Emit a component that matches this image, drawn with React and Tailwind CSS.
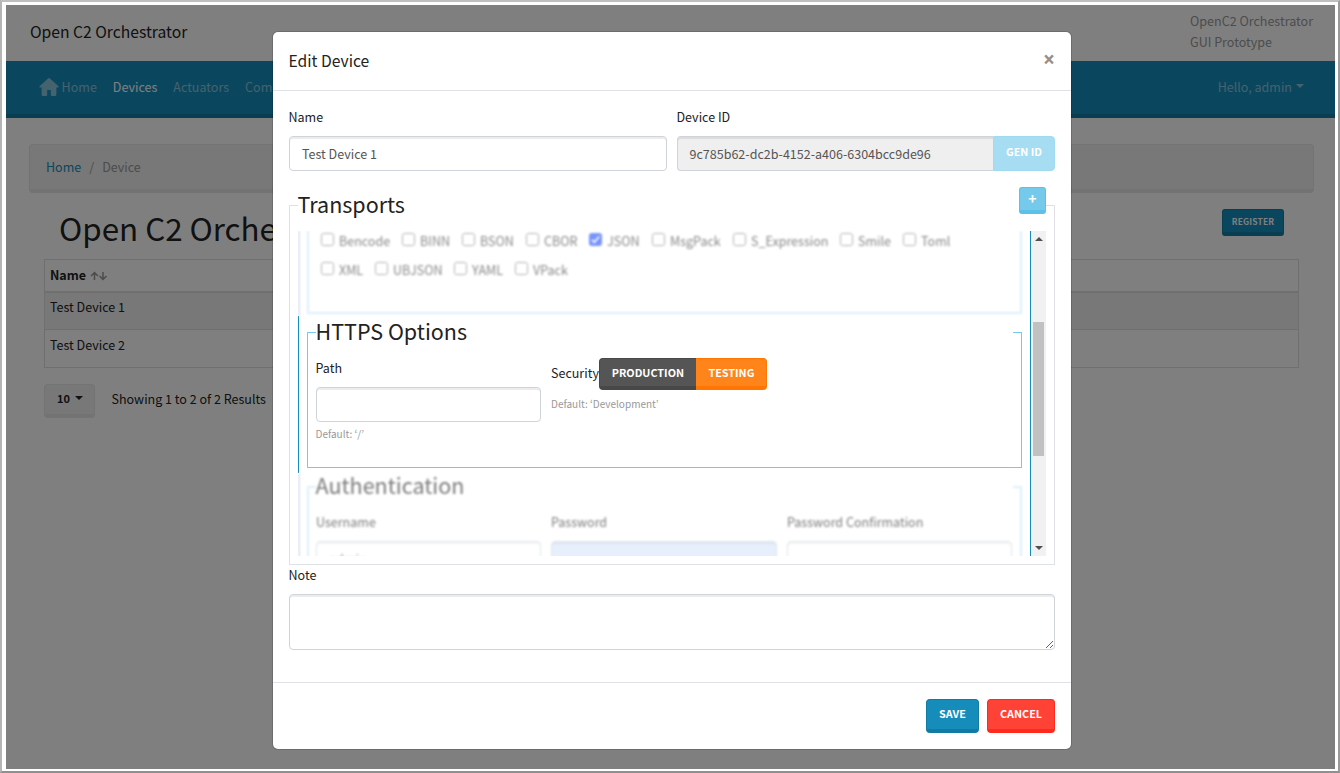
import React from "react";

const inputClass =
  "block w-full rounded-[4px] border border-[#ced4da] bg-white px-3 text-[12.53px] leading-[21px] text-[#555] shadow-[inset_0_2px_0_rgba(0,0,0,0.075)] outline-none";

const formats = [
  ["Bencode", "w-[81px]"],
  ["BINN", "w-[60px]"],
  ["BSON", "w-[64px]"],
  ["CBOR", "w-[63px]"],
  ["JSON", "w-[63px]"],
  ["MsgPack", "w-[81px]"],
  ["S_Expression", "w-[107px]"],
  ["Smile", "w-[63px]"],
  ["Toml", "w-[60px]"],
];
const formatsMore = [
  ["XML", "w-[54px]"],
  ["UBJSON", "w-[79px]"],
  ["YAML", "w-[61px]"],
  ["VPack", "w-[60px]"],
];

function Check({ label, width }) {
  const on = label === "JSON";
  return (
    <div className={`flex h-[29px] shrink-0 ${width}`}>
      <span
        className={`mt-px flex h-[13px] w-[13px] shrink-0 items-center justify-center rounded-[2.5px] border ${
          on ? "border-[#0b3cf5] bg-[#0b3cf5]" : "border-[#767676] bg-white"
        }`}
      >
        {on && (
          <svg viewBox="0 0 12 12" className="h-[11px] w-[11px]" fill="none" stroke="white" strokeWidth="1.7">
            <path d="M2 6.2 4.8 9 10 2.8" />
          </svg>
        )}
      </span>
      <span className="ml-[5px] mt-[-2px] whitespace-nowrap leading-[21px]">{label}</span>
    </div>
  );
}

function Caret() {
  return (
    <span className="mb-[3px] ml-[4px] h-0 w-0 border-x-[4px] border-t-[4px] border-x-transparent border-t-current" />
  );
}

function Page() {
  return (
    <div className="h-full w-full bg-white">
      <header className="flex h-14 justify-between pl-6 pr-[22px]">
        <div className="pt-[14px] text-[15.67px] leading-[26px] text-[#222]">Open C2 Orchestrator</div>
        <div className="pt-[5px] leading-[21px] text-[#999]">
          OpenC2 Orchestrator
          <br />
          GUI Prototype
        </div>
      </header>
      <nav className="flex h-[57px] items-start justify-between border-b-[4px] border-[#127ba3] bg-[#158cba] pl-8 pr-[31px] pt-[16px] text-white/50">
        <div className="flex h-[21px] items-center gap-4">
          <span className="flex items-center">
            <svg viewBox="0 0 22 20" className="-ml-[0.4px] mb-px mr-[2px] h-[20px] w-[22px]" fill="currentColor">
              <path d="M10 1.4Q11 .5 12 1.4L20.5 9.2Q21.2 10.4 20 10.6H18.4V17.4Q18.4 19 17 19H14Q12.8 19 12.8 17.8V13H9.2V17.8Q9.2 19 8 19H5Q3.6 19 3.6 17.4V10.6H2Q.8 10.4 1.5 9.2Z" />
            </svg>
            Home
          </span>
          <span className="text-white">Devices</span>
          <span>Actuators</span>
          <span>Commands</span>
        </div>
        <div className="flex h-[21px] items-center">
          Hello, admin <Caret />
        </div>
      </nav>
      <main className="px-[23px] pt-[26px]">
        <div className="mr-[-2px] flex h-[49px] items-start gap-2 rounded-[4px] border border-b-[4px] border-[#e6e6e6] bg-[#f0f0f0] pl-4 pt-[10.5px] leading-[21px] text-[#999]">
          <span className="text-[#158cba]">Home</span>
          <span>/</span>
          <span>Device</span>
        </div>
        <div className="pl-[15px] pr-[13px]">
          <div className="flex h-[66px] items-start justify-between pl-[15px] pr-[15px]">
            <h1 className="pt-[14px] text-[31.33px] leading-[42px] text-[#222]">Open C2 Orchestrator</h1>
            <button className="mt-[16px] flex h-[27px] w-[62px] justify-center rounded-[3px] border border-b-[4px] border-[#127ba3] bg-[#158cba] pt-[3px] text-[8.45px] font-bold leading-[16px] tracking-[0.15px] text-white">
              REGISTER
            </button>
          </div>
          <div className="border border-[#dedede]">
            <div className="flex h-[33px] items-center border-b-2 border-[#dedede] pl-[5px] font-bold text-[#222]">
              Name
              <svg viewBox="0 0 18 10" className="ml-[3.5px] h-[10px] w-[18px]" fill="none" stroke="#999" strokeWidth="1.5">
                <path d="M4.5 9V1.5M1 5 4.5 1.5 8 5M13 1v7.5M9.5 5 13 8.5 16.5 5" />
              </svg>
            </div>
            <div className="h-[37px] border-b border-[#dedede] bg-[#f0f0f0] pl-[5px] pt-[3px] leading-[21px] text-[#222]">
              Test Device 1
            </div>
            <div className="h-[37px] pl-[5px] pt-[4px] leading-[21px] text-[#222]">Test Device 2</div>
          </div>
          <div className="flex pt-4">
            <button className="flex h-[34px] w-[51px] justify-center rounded-[4px] border border-b-[4px] border-[#e6e6e6] bg-[#f0f0f0] pl-px pt-[4px] text-[10.97px] font-bold leading-[18px] text-[#222]">
              10
              <span className="ml-[5px] mt-[7px] h-0 w-0 border-x-[4px] border-t-[4px] border-x-transparent border-t-current" />
            </button>
            <span className="ml-[16.5px] mt-[4px] leading-[21px] text-[#222]">Showing 1 to 2 of 2 Results</span>
          </div>
        </div>
      </main>
    </div>
  );
}

function Modal() {
  return (
    <div className="absolute left-[273px] top-[32px] flex h-[717px] w-[798px] flex-col rounded-[5px] bg-white text-[#222] shadow-[0_0_0_1px_rgba(0,0,0,0.15)]">
      <div className="flex h-[59px] justify-between border-b border-[#dee2e6] px-4">
        <h5 className="-ml-[0.5px] pt-[16px] text-[15.67px] leading-[26px]">Edit Device</h5>
        <span className="pt-[14px] font-['Open_Sans',sans-serif] text-[21px] font-bold leading-[26px] text-[#919191]">
          ×
        </span>
      </div>
      <div className="flex h-[591px] flex-col px-4 pt-4">
        <div className="flex gap-[10px]">
          <div className="w-[378px]">
            <label className="-ml-[0.5px] block h-[29px] leading-[19px]">Name</label>
            <input className={`${inputClass} h-[35px]`} defaultValue="Test Device 1" />
          </div>
          <div className="w-[378px]">
            <label className="-ml-[0.5px] block h-[29px] leading-[19px]">Device ID</label>
            <div className="flex">
              <div className="h-[35px] w-[316px] rounded-l-[4px] border border-r-0 border-[#ced4da] bg-[#efefef] px-[11.5px] pt-[6px] leading-[21px] text-[#555] shadow-[inset_0_2px_0_rgba(0,0,0,0.075)]">
                9c785b62-dc2b-4152-a406-6304bcc9de96
              </div>
              <button className="h-[35px] w-[62px] rounded-r-[4px] border border-[#a0daf1] bg-[#a7ddf2] pb-[5px] text-[10.8px] font-bold leading-[18px] text-white">
                GEN ID
              </button>
            </div>
          </div>
        </div>

        <div className="mt-[16px] flex flex-col">
          <fieldset className="h-[378px] min-w-0 border border-[#dee2e6] px-2">
            <legend className="flex h-[37px] w-full justify-between">
              <span className="-ml-[0.5px] h-[34px] bg-white text-[21.5px] leading-[34px]">Transports</span>
              <button className="h-[27px] w-[27px] rounded-[3px] border border-b-[4px] border-[#5dc0e8] bg-[#75caeb] pb-[2px] text-[14px] font-bold leading-[18px] text-white">
                +
              </button>
            </legend>
            <div className="mt-[7px] flex h-[325px]">
              <div className="w-[733px] overflow-hidden border-r border-[#158cba]">
                <div className="h-[85px] border-l-2 border-[#dbe4ef] pl-[7px] pr-2 blur-[0.9px]">
                  <div className="h-[83px] border-x-2 border-b-2 border-[#dcf0fb] pl-[12px] pt-px">
                    <div className="opacity-55">
                      <div className="flex">
                        {formats.map(([label, width]) => (
                          <Check key={label} label={label} width={width} />
                        ))}
                      </div>
                      <div className="flex">
                        {formatsMore.map(([label, width]) => (
                          <Check key={label} label={label} width={width} />
                        ))}
                      </div>
                    </div>
                  </div>
                </div>
                <div className="h-[157px] border-l border-[#158cba] px-2">
                  <fieldset className="h-[152px] min-w-0 border border-[#75caeb] px-2">
                    <legend className="h-[32px] w-full text-[21.5px] leading-[30px]">
                      <span className="-ml-[0.5px]">HTTPS Options</span>
                    </legend>
                    <div className="flex gap-[10px]">
                      <div className="w-[225px] pt-[9px]">
                        <label className="-ml-[0.5px] block h-[30px] leading-[21px]">Path</label>
                        <input className={`${inputClass} h-[35px]`} />
                        <small className="-ml-[0.5px] mt-[3px] block text-[10.03px] leading-[17px] text-[#999]">
                          Default: ‘/’
                        </small>
                      </div>
                      <div className="pt-[10px]">
                        <div className="flex h-[32px] items-start">
                          <span className="pt-[4px] leading-[21px]">Security</span>
                          <button className="h-[32px] w-[97px] rounded-l-[4px] border border-r-0 border-b-[4px] border-[#484848] bg-[#555] pb-[2px] text-[10.8px] font-bold leading-[18px] text-white">
                            PRODUCTION
                          </button>
                          <button className="h-[32px] w-[71px] rounded-r-[4px] border border-b-[4px] border-l-0 border-[#ff7702] bg-[#ff851b] pb-[2px] pl-px text-[10.8px] font-bold leading-[18px] text-white">
                            TESTING
                          </button>
                        </div>
                        <small className="mt-[5px] block text-[10.03px] leading-[17px] text-[#999]">
                          Default: ‘Development’
                        </small>
                      </div>
                    </div>
                  </fieldset>
                </div>
                <div className="h-[95px] border-l-2 border-[#dbe4ef] pl-[7px] pr-2 blur-[0.9px]">
                  <fieldset className="h-[110px] min-w-0 border-2 border-[#dcf0fb] px-[7px]">
                    <legend className="h-[27px] w-full text-[21.5px] leading-[23px] text-[#222]/60">
                      <span className="-ml-[0.5px]">Authentication</span>
                    </legend>
                    <div className="flex gap-[10px] pt-[11px] opacity-60">
                      <div className="w-[225px]">
                        <label className="block h-[30px] leading-[21px]">Username</label>
                        <input className={`${inputClass} h-[35px]`} defaultValue="admin" />
                      </div>
                      <div className="w-[226px]">
                        <label className="block h-[30px] leading-[21px]">Password</label>
                        <div className="h-[35px] rounded-[4px] border border-[#ced4da] bg-[#d8e4fb] shadow-[inset_0_2px_0_rgba(0,0,0,0.075)]" />
                      </div>
                      <div className="w-[225px]">
                        <label className="block h-[30px] whitespace-nowrap leading-[21px]">Password Confirmation</label>
                        <input className={`${inputClass} h-[35px]`} />
                      </div>
                    </div>
                  </fieldset>
                </div>
              </div>
              <div className="flex w-[15px] flex-col items-center bg-[#f1f1f1]">
                <span className="mt-[6px] border-x-[4px] border-b-[4px] border-x-transparent border-b-[#505050]" />
                <span className="mt-[81px] h-[134px] w-[11px] bg-[#c1c1c1]" />
                <span className="mt-[90px] border-x-[4px] border-t-[4px] border-x-transparent border-t-[#505050]" />
              </div>
            </div>
          </fieldset>
        </div>
        <label className="-ml-[0.5px] block h-[29px] leading-[19px]">Note</label>
        <textarea className={`${inputClass} h-[56px] shrink-0 resize-y`} />
      </div>
      <div className="flex h-[67px] justify-end gap-2 border-t border-[#dee2e6] px-4 pt-4">
        <button className="h-[34px] w-[53px] rounded-[4px] border border-b-[4px] border-[#127ba3] bg-[#158cba] pb-[3px] text-[10.8px] font-bold leading-[18px] text-white">
          SAVE
        </button>
        <button className="h-[34px] w-[68px] rounded-[4px] border border-b-[4px] border-[#ff291d] bg-[#ff4136] pb-[3px] text-[10.8px] font-bold leading-[18px] text-white">
          CANCEL
        </button>
      </div>
    </div>
  );
}

export default function App() {
  return (
    <div className="relative h-[773px] w-[1340px] overflow-hidden border-2 border-b-[#909090] border-l-[#b5b5b5] border-r-[#999] border-t-[#bfbfbf] bg-white pb-[2px] pl-[4px] pr-[3px] pt-[3px] font-['Noto_Sans_CJK_JP','Source_Sans_Pro',sans-serif] text-[12.53px]">
      <div className="relative h-[764px] w-[1329px] overflow-hidden">
        <Page />
        <div className="absolute inset-0 bg-black/50" />
      </div>
      <div className="absolute -left-0.5 -top-0.5">
        <Modal />
      </div>
    </div>
  );
}
